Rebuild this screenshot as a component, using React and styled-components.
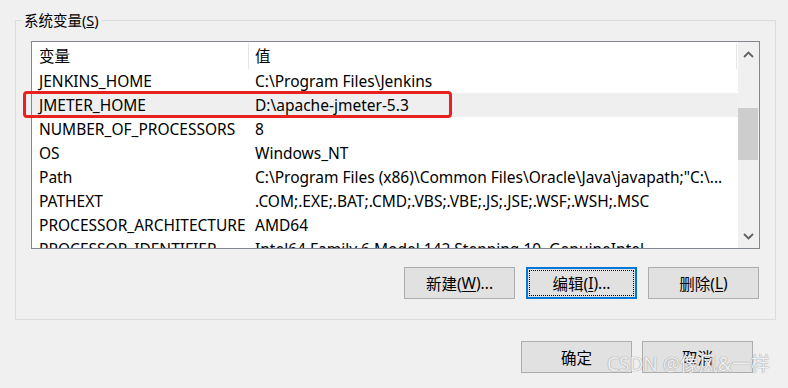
import React from 'react'
import styled, { createGlobalStyle } from 'styled-components'

const GlobalStyle = createGlobalStyle`
  html, body {
    margin: 0;
    padding: 0;
    background: #f0f0f0;
  }
  body {
    font-family: "Noto Sans", "Noto Sans CJK SC", sans-serif;
    font-size: 15.5px;
    color: #000;
  }
`

const Page = styled.div`
  position: relative;
  width: 788px;
  height: 388px;
  overflow: hidden;
  background: #f0f0f0;
`

const Group = styled.div`
  margin: 20px 0 0 15px;
  width: 761px;
  box-sizing: border-box;
  border: 1px solid #dcdcdc;
  padding: 0 16px 20px 15px;
`

const GroupTitle = styled.div`
  width: fit-content;
  height: 20px;
  line-height: 20px;
  margin: -11px 0 0 -9px;
  padding: 0 2px;
  background: #f0f0f0;
  font-size: 14.5px;
`

const ListBox = styled.div`
  margin-top: 11px;
  width: 729px;
  height: 208px;
  box-sizing: border-box;
  border: 1px solid #828790;
  background: #fff;
  display: flex;
  overflow: hidden;
`

const Table = styled.div`
  flex: 1;
  overflow: hidden;
`

const HeaderRow = styled.div`
  display: flex;
  height: 27px;
  align-items: center;
  position: relative;
  &::after {
    content: '';
    position: absolute;
    right: 1px;
    top: 1px;
    bottom: 0;
    width: 1px;
    background: #e5e5e5;
  }
`

const Row = styled.div`
  display: flex;
  height: 24px;
  align-items: center;
  background: ${p => (p.$selected ? '#efefef' : 'transparent')};
  white-space: nowrap;
`

const NameCell = styled.div`
  width: 217px;
  flex-shrink: 0;
  padding-left: 7px;
  box-sizing: border-box;
  overflow: hidden;
`

const ValueCell = styled.div`
  flex: 1;
  padding-left: 6px;
  overflow: hidden;
`

const HeadName = styled(NameCell)`
  height: 26px;
  margin-top: 1px;
  line-height: 26px;
  border-right: 1px solid #e5e5e5;
`

const ScrollBar = styled.div`
  width: 21px;
  background: #f0f0f0;
  display: flex;
  flex-direction: column;
`

const ArrowButton = styled.div`
  height: 24px;
  display: flex;
  align-items: center;
  justify-content: center;
  color: #606060;
`

const Track = styled.div`
  flex: 1;
`

const Thumb = styled.div`
  margin: ${p => p.$offset}px 1px 0 0;
  height: ${p => p.$size}px;
  background: #cdcdcd;
`

const ButtonRow = styled.div`
  display: flex;
  justify-content: flex-end;
  gap: 11px;
  margin-top: 18px;
`

const DialogButtons = styled.div`
  display: flex;
  justify-content: flex-end;
  gap: 10px;
  margin: 21px 35px 0 0;
`

const Button = styled.div`
  width: 111px;
  height: 32px;
  box-sizing: border-box;
  display: flex;
  align-items: center;
  justify-content: center;
  background: #e1e1e1;
  border: ${p => (p.$focused ? '2px solid #0078d7' : '1px solid #adadad')};
  outline: ${p => (p.$focused ? '1px dotted #000' : 'none')};
  outline-offset: -4px;
  font-size: 15.5px;
  u {
    text-underline-offset: 2px;
  }
`

const Highlight = styled.div`
  position: absolute;
  left: 23px;
  top: 91px;
  width: 429px;
  height: 27px;
  box-sizing: border-box;
  border: 3px solid #e8231d;
  border-radius: 4px;
`

const Watermark = styled.div`
  position: absolute;
  left: 607px;
  top: 351px;
  font-size: 19px;
  line-height: 26px;
  white-space: nowrap;
  color: rgba(255, 255, 255, 0.85);
  text-shadow: 0 0 1px #9a9a9a, 0 0 1px #9a9a9a;
`

const Chevron = ({ up }) => (
  <svg width="11" height="7" viewBox="0 0 11 7">
    <path
      d={up ? 'M1 6 L5.5 1.5 L10 6' : 'M1 1 L5.5 5.5 L10 1'}
      fill="none"
      stroke="currentColor"
      strokeWidth="1.8"
    />
  </svg>
)

const vars = [
  ['JENKINS_HOME', 'C:\\Program Files\\Jenkins'],
  ['JMETER_HOME', 'D:\\apache-jmeter-5.3', true],
  ['NUMBER_OF_PROCESSORS', '8'],
  ['OS', 'Windows_NT'],
  ['Path', 'C:\\Program Files (x86)\\Common Files\\Oracle\\Java\\javapath;"C:\\...'],
  ['PATHEXT', '.COM;.EXE;.BAT;.CMD;.VBS;.VBE;.JS;.JSE;.WSF;.WSH;.MSC'],
  ['PROCESSOR_ARCHITECTURE', 'AMD64'],
  ['PROCESSOR_IDENTIFIER', 'Intel64 Family 6 Model 142 Stepping 10, GenuineIntel'],
]

export default function App() {
  return (
    <Page>
      <GlobalStyle />
      <Group>
        <GroupTitle>系统变量(<u>S</u>)</GroupTitle>
        <ListBox>
          <Table>
            <HeaderRow>
              <HeadName>变量</HeadName>
              <ValueCell>值</ValueCell>
            </HeaderRow>
            {vars.map(([name, value, selected]) => (
              <Row key={name} $selected={selected}>
                <NameCell>{name}</NameCell>
                <ValueCell>{value}</ValueCell>
              </Row>
            ))}
          </Table>
          <ScrollBar>
            <ArrowButton><Chevron up /></ArrowButton>
            <Track>
              <Thumb $offset={42} $size={52} />
            </Track>
            <ArrowButton><Chevron /></ArrowButton>
          </ScrollBar>
        </ListBox>
        <ButtonRow>
          <Button>新建(<u>W</u>)...</Button>
          <Button $focused>编辑(<u>I</u>)...</Button>
          <Button>删除(<u>L</u>)</Button>
        </ButtonRow>
      </Group>
      <DialogButtons>
        <Button>确定</Button>
        <Button>取消</Button>
      </DialogButtons>
      <Highlight />
      <Watermark>CSDN @像风&amp;一样</Watermark>
    </Page>
  )
}
